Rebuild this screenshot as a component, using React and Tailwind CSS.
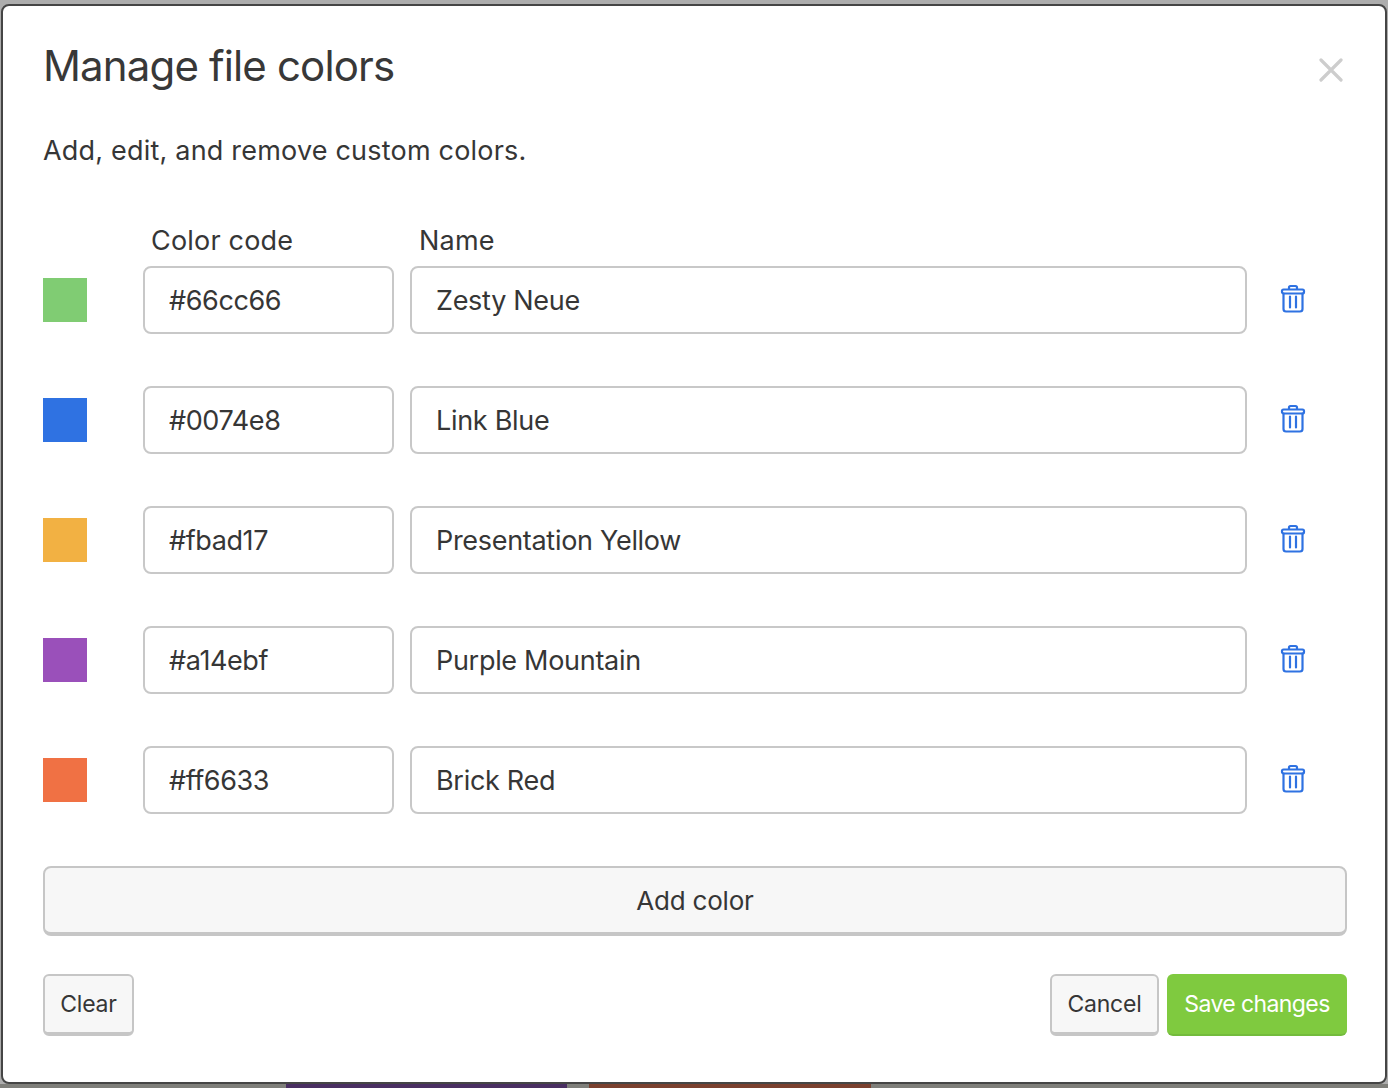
const rows = [
  { swatch: "bg-[#80cc73]", code: "#66cc66", name: "Zesty Neue" },
  { swatch: "bg-[#2f72e2]", code: "#0074e8", name: "Link Blue" },
  { swatch: "bg-[#f2b143]", code: "#fbad17", name: "Presentation Yellow" },
  { swatch: "bg-[#9a50ba]", code: "#a14ebf", name: "Purple Mountain" },
  { swatch: "bg-[#f07144]", code: "#ff6633", name: "Brick Red" },
];

function Trash() {
  return (
    <svg width="26" height="30" viewBox="0 0 26 30" fill="none" stroke="#2f72e2" strokeWidth="2.2" strokeLinecap="round" strokeLinejoin="round">
      <path d="M9 5V3.5A1.5 1.5 0 0 1 10.5 2h5A1.5 1.5 0 0 1 17 3.5V5" />
      <rect x="2" y="5.5" width="22" height="4" rx="1.5" />
      <path d="M3.5 9.5V25a2.5 2.5 0 0 0 2.5 2.5h14a2.5 2.5 0 0 0 2.5-2.5V9.5" />
      <path d="M10 12.5V23.5M16 12.5V23.5" />
    </svg>
  );
}

const inputBase =
  "h-[68px] rounded-[8px] border-2 border-[#c8c8c8] bg-white pl-[24px] pr-3 text-[27px] text-[#363636] outline-none font-['Inter',sans-serif]";
const btnCls =
  "h-[62px] rounded-[6px] border-2 border-b-[4px] border-[#c6c6c6] bg-[#f7f7f7] text-[23px] text-[#363636] tracking-[-0.2px]";

export default function App() {
  return (
    <div className="flex h-[1088px] w-full flex-col overflow-hidden bg-[#adadad] font-['Inter',sans-serif] text-[#363636]">
      <div className="h-[4px] shrink-0" />
      <div className="mx-[1px] flex h-[1080px] shrink-0 flex-col rounded-[8px] border-2 border-[#454545] bg-white px-[40px]">
        <div className="flex h-[122px] shrink-0 items-start justify-between">
          <h1 className="mt-[30px] text-[42px] leading-[60px] font-normal tracking-[-0.85px] text-[#383838]">Manage file colors</h1>
          <button className="mt-[52px] mr-[2px] text-[#cdcdcd]" aria-label="Close">
            <svg width="24" height="24" viewBox="0 0 24 24" stroke="currentColor" strokeWidth="3.2" strokeLinecap="round">
              <path d="M2 2L22 22M22 2L2 22" />
            </svg>
          </button>
        </div>
        <p className="mt-[3px] text-[27px] leading-[40px] tracking-[0.2px]">Add, edit, and remove custom colors.</p>
        <div className="mt-[50px] flex h-[40px] text-[27px] leading-[40px] tracking-[0.2px]">
          <span className="ml-[108px] w-[268px]">Color code</span>
          <span>Name</span>
        </div>
        <div className="mt-[5px] flex flex-col gap-[52px]">
          {rows.map((r) => (
            <div key={r.code} className="flex items-center">
              <div className={`h-[44px] w-[44px] shrink-0 ${r.swatch}`} />
              <input readOnly value={r.code} className={`ml-[56px] w-[251px] tracking-[-0.4px] ${inputBase}`} />
              <input readOnly value={r.name} className={`ml-[16px] w-[837px] tracking-[-0.3px] ${inputBase}`} />
              <div className="ml-[33px] mb-[2px] flex">
                <Trash />
              </div>
            </div>
          ))}
        </div>
        <button className="mt-[52px] h-[70px] w-[1304px] shrink-0 rounded-[8px] border-2 border-b-[4px] border-[#c6c6c6] bg-[#f7f7f7] text-[26px] tracking-[-0.2px]">
          Add color
        </button>
        <div className="mt-[38px] flex w-[1304px] items-start">
          <button className={`${btnCls} w-[91px]`}>Clear</button>
          <button className={`${btnCls} ml-auto w-[109px]`}>Cancel</button>
          <button className="ml-[8px] h-[62px] w-[180px] rounded-[6px] border-b-[2px] border-[#73bb3c] bg-[#7fca3f] text-[23px] tracking-[-0.6px] text-white">
            Save changes
          </button>
        </div>
      </div>
      <div className="flex h-[4px] shrink-0 bg-[#7f7f7a]">
        <div className="ml-[286px] w-[281px] bg-[#4a2f62]" />
        <div className="ml-[22px] w-[282px] bg-[#7a402e]" />
      </div>
    </div>
  );
}
